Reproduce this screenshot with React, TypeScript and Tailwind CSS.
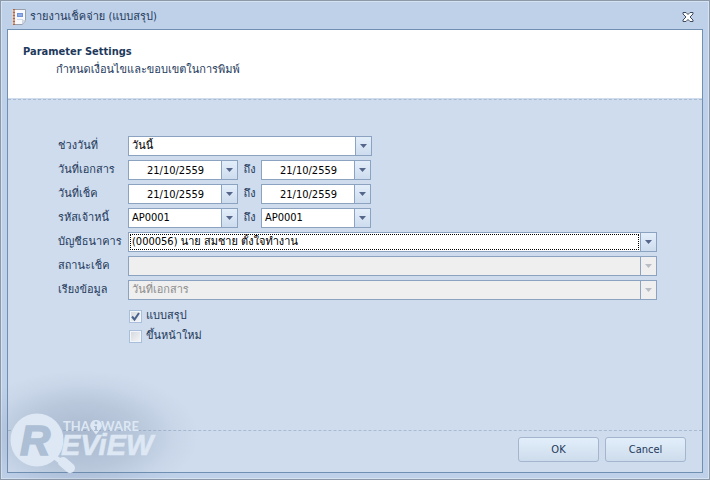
import React, { useState } from "react";

const fieldBox = "relative flex h-5 border border-[#8ba2c1]";
const control =
  "h-full min-w-0 flex-1 appearance-none bg-transparent pl-[3px] text-[11px] outline-none disabled:opacity-100";

function Triangle({ muted = false }: { muted?: boolean }) {
  return (
    <svg width="7" height="4" viewBox="0 0 7 4" aria-hidden="true">
      <path d="M0 0h7L3.500 4z" fill={muted ? "#b9bdc6" : "#55668a"} />
    </svg>
  );
}

const arrowCell =
  "flex w-4 shrink-0 items-center justify-center border-l border-[#8ba2c1] bg-linear-to-b from-[#e3eefa] to-[#cddcee]";

type SelectProps = {
  id: string;
  options: string[];
  width: string;
  disabled?: boolean;
  focused?: boolean;
  label?: string;
};

function SelectField({ id, options, width, disabled, focused, label }: SelectProps) {
  return (
    <div className={`${fieldBox} ${width} ${disabled ? "bg-[#efefef]" : "bg-white"}`}>
      <select
        id={id}
        aria-label={label}
        disabled={disabled}
        className={`${control} pr-4 ${disabled ? "text-[#8d8d8d]" : "text-black"}`}
      >
        {options.map((o) => (
          <option key={o}>{o}</option>
        ))}
      </select>
      {focused && (
        <span className="pointer-events-none absolute top-px right-[17px] bottom-px left-px border border-dotted border-black" />
      )}
      <span
        className={`pointer-events-none absolute inset-y-0 right-0 ${
          disabled ? "flex w-4 items-center justify-center border-l border-[#8ba2c1] bg-[#efefef]" : arrowCell
        }`}
      >
        <Triangle muted={disabled} />
      </span>
    </div>
  );
}

function DateField({ id, label }: { id: string; label?: string }) {
  const [value, setValue] = useState("21/10/2559");
  return (
    <div className={`${fieldBox} w-[110px] bg-white`}>
      <input
        id={id}
        aria-label={label}
        value={value}
        onChange={(e) => setValue(e.target.value)}
        className={`${control} pr-0.5 text-center text-black`}
      />
      <button type="button" aria-label="เลือกวันที่" className={arrowCell}>
        <Triangle />
      </button>
    </div>
  );
}

function Row({ id, label, children }: { id: string; label: string; children: React.ReactNode }) {
  return (
    <div className="flex h-5 items-center">
      <label htmlFor={id} className="w-[70px] shrink-0 whitespace-nowrap">
        {label}
      </label>
      {children}
    </div>
  );
}

function To() {
  return <span className="w-[23px] text-center">ถึง</span>;
}

function Check({ id, label, checked }: { id: string; label: string; checked?: boolean }) {
  return (
    <div className="flex h-5 items-center gap-1">
      <span className="relative flex size-[13px]">
        <input
          id={id}
          type="checkbox"
          defaultChecked={checked}
          className="peer size-[13px] appearance-none border border-[#a9bedb] bg-linear-to-br from-[#d3d8df] to-[#f6f6f6] shadow-[inset_0_0_0_1px_#f2f5f9]"
        />
        <svg
          viewBox="0 0 13 13"
          className="pointer-events-none absolute inset-0 hidden peer-checked:block"
          aria-hidden="true"
        >
          <path d="M3 6.500L5.500 9.500L10 3" fill="none" stroke="#4a628e" strokeWidth="2" />
        </svg>
      </span>
      <label htmlFor={id}>{label}</label>
    </div>
  );
}

function Watermark() {
  return (
    <svg
      className="pointer-events-none absolute bottom-0 left-0"
      width="220"
      height="120"
      viewBox="0 360 220 120"
      role="img"
      aria-label="Thaiware Review"
    >
      <defs>
        <radialGradient id="shade">
          <stop offset="0" stopColor="#6c7f9a" stopOpacity="0.38" />
          <stop offset="0.5" stopColor="#6c7f9a" stopOpacity="0.22" />
          <stop offset="0.8" stopColor="#6c7f9a" stopOpacity="0.06" />
          <stop offset="1" stopColor="#6c7f9a" stopOpacity="0" />
        </radialGradient>
      </defs>
      <ellipse cx="80" cy="437" rx="118" ry="66" fill="url(#shade)" />
      <g fill="#dde8f4">
        <circle cx="36" cy="441" r="26.500" />
        <path d="M55 459L70 470" stroke="#dde8f4" strokeWidth="5" strokeLinecap="round" />
        <path d="M62 463L69 469" stroke="#dde8f4" strokeWidth="10" strokeLinecap="round" />
        <g fontFamily="Lato, sans-serif" fontWeight="700" fontSize="13">
          <text x="62" y="432">THA</text>
          <text x="100" y="432">WARE</text>
        </g>
        <path d="M95 421a5.500 5.500 0 0 1 4 9.500l-4 5l-4-5a5.500 5.500 0 0 1 4-9.500z" />
        <circle cx="95" cy="424" r="1.400" fill="#adbfd5" />
        <path d="M93 427h3v4h1v1h-4v-1h1v-3h-1z" fill="#adbfd5" />
        <text
          x="60"
          y="456"
          fontFamily="'Liberation Sans', sans-serif"
          fontStyle="italic"
          fontWeight="700"
          fontSize="29"
          stroke="#dde8f4"
          strokeWidth=".6"
        >
          EViEW
        </text>
      </g>
      <text
        x="19"
        y="456"
        fill="#adbfd5"
        stroke="#adbfd5"
        strokeWidth="1.500"
        fontFamily="'Liberation Sans', sans-serif"
        fontStyle="italic"
        fontWeight="700"
        fontSize="42"
      >
        R
      </text>
    </svg>
  );
}

const pushButton =
  "h-[25px] w-[81px] rounded-[3px] border border-[#a5b5ce] bg-linear-to-b from-[#e2eefa] to-[#cddcec] text-[11px]";
const separator = "h-px border-t border-dashed border-[#a8bbd3]";

export default function App() {
  return (
    <main
      className="relative flex min-h-screen flex-col border border-[#8d99a9] bg-[#bfd1e9] px-1.5 pb-1.5 text-[11px] leading-4 text-[#1e395b] shadow-[inset_0_0_0_1px_#d5e2f2]"
      style={{
        fontFamily: "Tahoma, 'DejaVu Sans Condensed', Waree, Garuda, Umpush, Loma, 'Noto Sans Thai', sans-serif",
      }}
    >
      <header className="flex h-7 items-center gap-1 pt-1 pr-[7px] pl-[5px]">
        <svg width="14" height="16" viewBox="0 0 14 16" aria-hidden="true">
          <path d="M2.500.5h11v11l-3 4h-8z" fill="#f8f9fc" stroke="#9a9fac" />
          <path d="M13.500 11.500l-3 4v-4z" fill="#d8dde6" stroke="#b3bac6" strokeWidth=".5" />
          <path d="M1 0h2v16H1z" fill="#b5653b" />
          <path d="M0 2h3M0 5h3M0 8h3M0 11h3M0 14h3" stroke="#f0dfd5" />
          <path d="M5 4h6v4H5z" fill="#6f93dc" />
          <path d="M6 6h4" stroke="#b6caf2" />
          <path d="M5 10.500h6" stroke="#d3dbea" />
        </svg>
        <h1 className="flex-1">รายงานเช็คจ่าย (แบบสรุป)</h1>
        <button type="button" aria-label="ปิด" className="flex h-4 w-4 items-center justify-center">
          <svg width="12" height="10" viewBox="0 0 12 10" aria-hidden="true">
            <path
              d="M1 .5h3l2 2l2-2h3v1.500l-3 3l3 3v1.500H8l-2-2l-2 2H1V8l3-3l-3-3z"
              fill="#fff"
              stroke="#3f4b60"
            />
          </svg>
        </button>
      </header>

      <section className="flex flex-1 flex-col border border-[#6f8fb3] bg-[#cfdcee]">
        <div className="h-[68px] bg-white px-[15px] pt-3.5">
          <h2 className="font-bold">Parameter Settings</h2>
          <p className="mt-0.5 pl-[33px]">กำหนดเงื่อนไขและขอบเขตในการพิมพ์</p>
        </div>
        <div className={`${separator} mt-px`} />

        <form className="flex flex-1 flex-col" onSubmit={(e) => e.preventDefault()}>
          <div className="flex flex-1 flex-col gap-1 pt-9 pr-[45px] pl-[50px]">
            <Row id="range" label="ช่วงวันที่">
              <SelectField id="range" options={["วันนี้"]} width="w-[244px]" />
            </Row>
            <Row id="doc-from" label="วันที่เอกสาร">
              <DateField id="doc-from" />
              <To />
              <DateField id="doc-to" label="ถึงวันที่เอกสาร" />
            </Row>
            <Row id="chq-from" label="วันที่เช็ค">
              <DateField id="chq-from" />
              <To />
              <DateField id="chq-to" label="ถึงวันที่เช็ค" />
            </Row>
            <Row id="ap-from" label="รหัสเจ้าหนี้">
              <SelectField id="ap-from" options={["AP0001"]} width="w-[110px]" />
              <To />
              <SelectField id="ap-to" label="ถึงรหัสเจ้าหนี้" options={["AP0001"]} width="w-[110px]" />
            </Row>
            <Row id="bank" label="บัญชีธนาคาร">
              <SelectField id="bank" options={["(000056) นาย สมชาย ตั้งใจทำงาน"]} width="flex-1" focused />
            </Row>
            <Row id="status" label="สถานะเช็ค">
              <SelectField id="status" options={[""]} width="flex-1" disabled />
            </Row>
            <Row id="sort" label="เรียงข้อมูล">
              <SelectField id="sort" options={["วันที่เอกสาร"]} width="flex-1" disabled />
            </Row>
            <div className="mt-0.5 pl-[71px]">
              <Check id="summary" label="แบบสรุป" checked />
              <Check id="new-page" label="ขึ้นหน้าใหม่" />
            </div>
          </div>
          <div className={separator} />
          <footer className="flex justify-end gap-1.5 pt-1.5 pr-4 pb-2.5">
            <button type="submit" className={pushButton}>
              OK
            </button>
            <button type="button" className={pushButton}>
              Cancel
            </button>
          </footer>
        </form>
      </section>
      <Watermark />
    </main>
  );
}
